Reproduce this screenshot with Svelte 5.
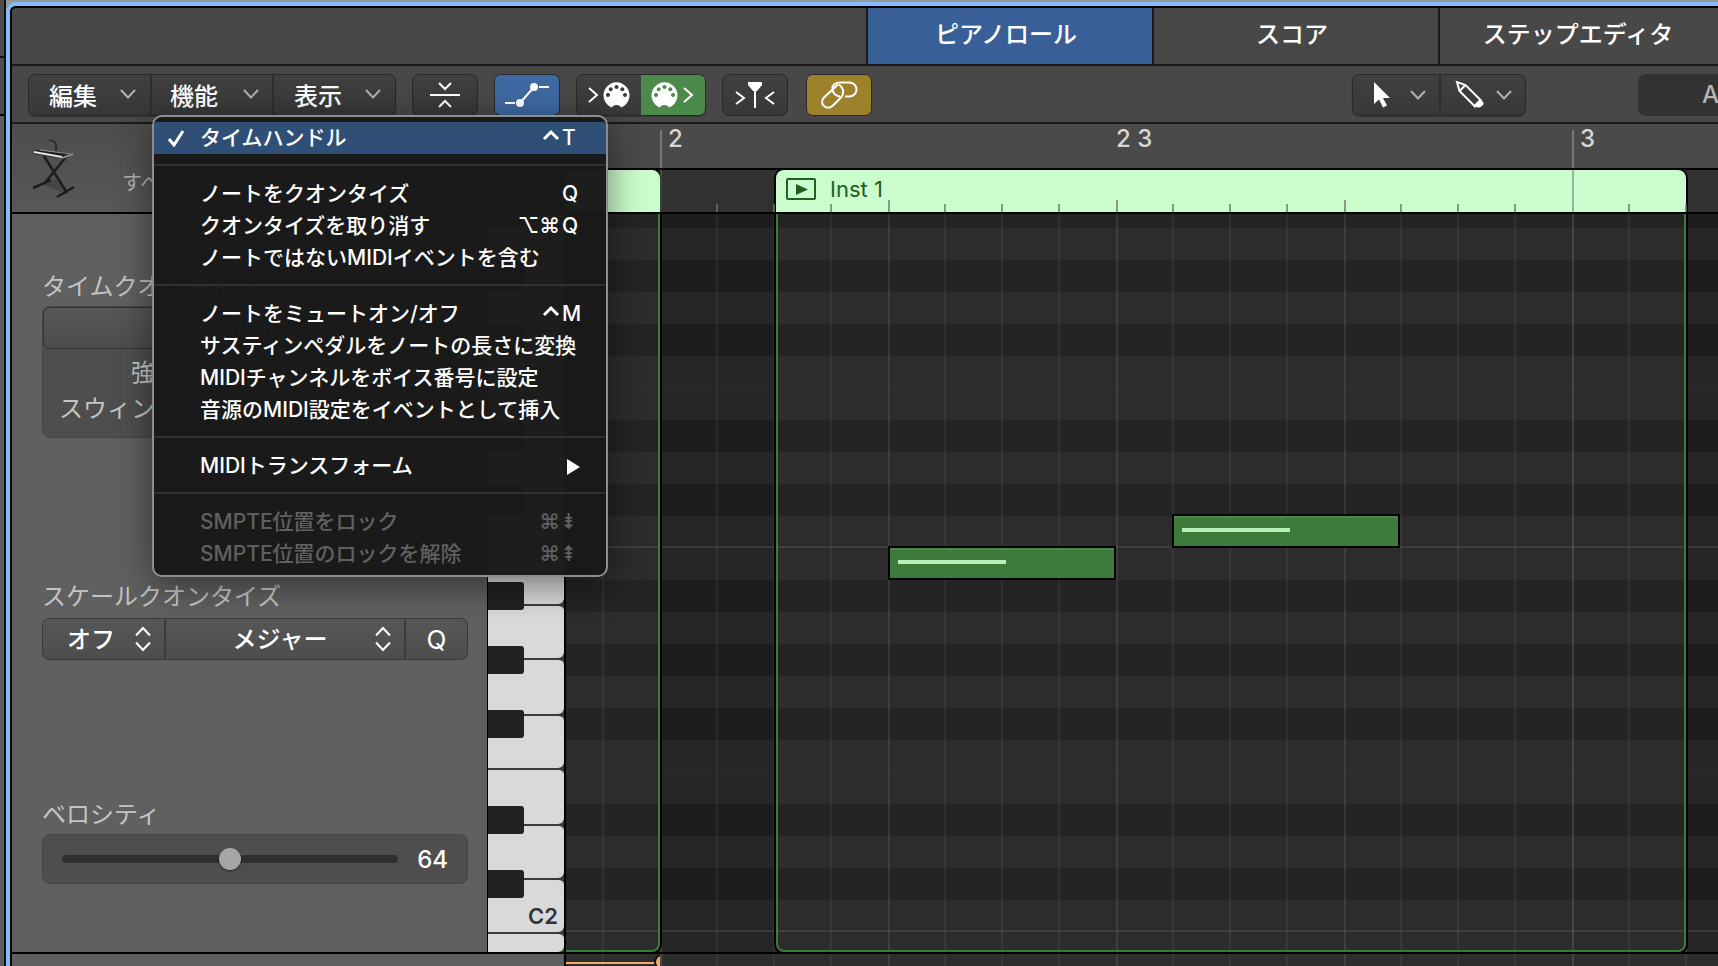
<script lang="ts">
    const tabs = ['ピアノロール', 'スコア', 'ステップエディタ'];
    let activeTab = $state('ピアノロール');
    let scaleMode = $state('オフ');
    let scaleType = $state('メジャー');
    let velocity = $state(64);

    type Item = { label: string; mods?: string; key?: string; checked?: boolean; disabled?: boolean; submenu?: boolean };

    const menuGroups: Item[][] = [
        [{ label: 'タイムハンドル', mods: '^', key: 'T', checked: true }],
        [
            { label: 'ノートをクオンタイズ', key: 'Q' },
            { label: 'クオンタイズを取り消す', mods: '⌥⌘', key: 'Q' },
            { label: 'ノートではないMIDIイベントを含む' }
        ],
        [
            { label: 'ノートをミュートオン/オフ', mods: '^', key: 'M' },
            { label: 'サスティンペダルをノートの長さに変換' },
            { label: 'MIDIチャンネルをボイス番号に設定' },
            { label: '音源のMIDI設定をイベントとして挿入' }
        ],
        [{ label: 'MIDIトランスフォーム', submenu: true }],
        [
            { label: 'SMPTE位置をロック', mods: '⌘', key: '⇟', disabled: true },
            { label: 'SMPTE位置のロックを解除', mods: '⌘', key: '⇞', disabled: true }
        ]
    ];

    // timeline geometry: 16 divisions per bar
    const division = 57;
    const barTwo = 94;
    const lines = Array.from({ length: 48 }, (_, i) => {
        const step = i - 1;
        const kind = step % 16 === 0 ? 'bar' : step % 4 === 0 ? 'beat' : 'div';
        return { x: barTwo + step * division - (kind === 'div' ? 1 : 0), kind };
    });
    const markers = [
        { text: '2', x: barTwo + 8 },
        { text: '2 3', x: barTwo + 8 * division },
        { text: '3', x: barTwo + 16 * division + 8 }
    ];
    const regions = [
        { name: '', x: -818, width: 912 },
        { name: 'Inst 1', x: 210, width: 910 }
    ];

    // one octave, B down to C
    const whiteKeys = [56, 54, 56, 54, 56, 54, 54];
    const blackKeys = [34, 98, 162, 258, 322];
    const octaves = ['', 'C2'];
    const lanes = ['w', 'b', 'w', 'b', 'w', 'b', 'w e', 'w', 'b', 'w', 'b', 'w c'];
    const notes = [
        { x: barTwo + 4 * division, y: 332 },
        { x: barTwo + 9 * division - 1, y: 300 }
    ];
</script>

{#snippet chevron()}
    <svg class="chevron" width="16" height="10" viewBox="0 0 16 10" aria-hidden="true"><path d="M1 1l7 7.500l7-7.500" /></svg>
{/snippet}

{#snippet updown()}
    <svg class="updown" width="18" height="26" viewBox="0 0 18 26" aria-hidden="true"><path d="M2 9.500L9 2l7 7.500M2 16.500L9 24l7-7.500" /></svg>
{/snippet}

{#snippet midiPort()}
    <path
        class="solid"
        fill-rule="evenodd"
        d="M9 25.500A13 13 0 1 1 18 25.500C17.500 22 9.500 22 9 25.500ZM13.500 3a2 2 0 1 0 .01 0ZM7.700 5.200a2 2 0 1 0 .01 0ZM19.300 5.200a2 2 0 1 0 .01 0ZM5 11a2 2 0 1 0 .01 0ZM22 11a2 2 0 1 0 .01 0Z"
    />
{/snippet}

<div class="desktop">
    <div class="edge"></div>
    <div class="window">
        <div class="inner">
            <nav class="tabs">
                {#each tabs as tab}
                    <button class:active={tab === activeTab} onclick={() => (activeTab = tab)}>{tab}</button>
                {/each}
            </nav>

            <div class="toolbar">
                <div class="group menus">
                    <button>編集{@render chevron()}</button>
                    <div class="menu-anchor">
                        <button aria-haspopup="true" aria-expanded="true">機能{@render chevron()}</button>
                        <div class="menu" role="menu">
                            {#each menuGroups as group, i}
                                {#if i > 0}<hr />{/if}
                                {#each group as item}
                                    <button class="item" class:current={item.checked} role="menuitem" disabled={item.disabled}>
                                        <span class="check">
                                            {#if item.checked}
                                                <svg width="18" height="18" viewBox="0 0 18 18"><path d="M2 10l5 6L16 2" /></svg>
                                            {/if}
                                        </span>
                                        <span class="label">{item.label}</span>
                                        {#if item.mods === '^'}
                                            <svg class="ctrl" width="18" height="20" viewBox="0 0 18 20" role="img" aria-label="control"><path d="M2 11l7-7l7 7" /></svg>
                                        {:else if item.mods}
                                            <span class="mods">{item.mods}</span>
                                        {/if}
                                        {#if item.submenu}
                                            <span class="key">
                                                <svg width="18" height="18" viewBox="0 0 18 18"><path class="solid" d="M5 2v16l13-8z" /></svg>
                                            </span>
                                        {:else if item.key}
                                            <span class="key">{item.key}</span>
                                        {/if}
                                    </button>
                                {/each}
                            {/each}
                        </div>
                    </div>
                    <button>表示{@render chevron()}</button>
                </div>

                <button class="tool" aria-label="ノートを折りたたむ">
                    <svg width="32" height="30" viewBox="0 0 32 30"><path d="M10 3l6 6l6-6M1 15h30M10 27l6-6l6 6" /></svg>
                </button>
                <button class="tool blue" aria-label="オートメーション">
                    <svg width="46" height="26" viewBox="0 0 46 26"><path d="M1 21h10M16 21L30 5M35 5h10" /><circle class="solid" cx="16" cy="21" r="4" /><circle class="solid" cx="30" cy="5" r="4" /></svg>
                </button>
                <div class="group midi">
                    <button aria-label="MIDI入力">
                        <svg width="44" height="28" viewBox="0 0 44 28"><path d="M2 7l8 7l-8 7" /><g transform="translate(16 1)">{@render midiPort()}</g></svg>
                    </button>
                    <button class="green" aria-label="MIDI出力">
                        <svg width="44" height="28" viewBox="0 0 44 28"><g transform="translate(0 1)">{@render midiPort()}</g><path d="M33 7l8 7l-8 7" /></svg>
                    </button>
                </div>
                <button class="tool" aria-label="再生ヘッドをキャッチ">
                    <svg width="40" height="28" viewBox="0 0 40 28"><path d="M1 11l8 6l-8 6M39 11l-8 6l8 6M20 6v21" /><path class="solid" d="M13 1h14v3l-5 6h-4l-5-6z" /></svg>
                </button>
                <button class="tool gold" aria-label="リンク">
                    <svg width="38" height="28" viewBox="0 0 38 28"><path d="M18 3.500L4 16.500c-6 6 3 14 9 8l8-8c4-5 2-10-2-13M20 15.500c-8 0-12-14 0-14h9c10 0 10 14 0 14h-4" /></svg>
                </button>

                <div class="group pointers">
                    <button aria-label="ポインタツール">
                        <svg width="18" height="28" viewBox="0 0 18 28"><path class="solid" d="M1 1v22l5-4.500l4 8l4-2l-4-7.500h7z" /></svg>
                        {@render chevron()}
                    </button>
                    <button aria-label="鉛筆ツール">
                        <svg width="30" height="30" viewBox="0 0 30 30"><path d="M2 2l2.500 9L20 26.500l6-6L10.500 5zM4.500 11l6-6" /><path class="solid" d="M19 25l6-6l3 3q1.500 2-1 4t-4.500 1.500z" /></svg>
                        {@render chevron()}
                    </button>
                </div>
                <div class="display">A</div>
            </div>

            <div class="editor">
                <header class="track">
                    <svg class="synth" width="44" height="62" viewBox="0 0 44 62" aria-hidden="true">
                        <path d="M10 46l14-5l10 15z" fill="#464646" stroke="none" />
                        <path d="M17 2q7 1 7 5v6" fill="none" stroke="#252525" stroke-width="1.500" />
                        <path d="M12 18L35 55M34 19L12 46M1 50l18-8M25 59l17-10" fill="none" stroke="#1c1c1c" stroke-width="2.500" />
                        <path d="M3 12l38 4l-8 5L2 16z" fill="#231c1c" stroke="none" />
                        <path d="M2 14l28 5" stroke="#e4e4ea" stroke-width="2" />
                        <path d="M30 20l11-4" stroke="#88888f" stroke-width="2" />
                        <path d="M8 12l31 4" stroke="#8b8b91" stroke-width="1" />
                    </svg>
                    <span>すべて</span>
                </header>

                <div class="timeline">
                    <div class="ruler">
                        {#each markers as marker}
                            <span class="marker" style="left: {marker.x}px">{marker.text}</span>
                        {/each}
                        {#each lines.filter((l) => l.kind === 'bar') as line}
                            <i class="tick" style="left: {line.x}px"></i>
                        {/each}
                    </div>
                    <div class="strip">
                        {#each regions as region}
                            <div class="region-head" style="left: {region.x}px; width: {region.width}px">
                                {#if region.name}
                                    <svg width="30" height="22" viewBox="0 0 30 22" aria-hidden="true"><rect x="1" y="1" width="28" height="20" rx="1" /><path d="M10 6v11l12-5.500z" /></svg>
                                    {region.name}
                                {/if}
                            </div>
                        {/each}
                        {#each lines as line}
                            <i class="tick {line.kind}" style="left: {line.x}px"></i>
                        {/each}
                    </div>
                </div>

                <aside class="inspector">
                    <section>
                        <h2>タイムクオンタイズ</h2>
                        <div class="box quantize">
                            <button>1/16</button>
                            <p>強さ</p>
                            <p>スウィング</p>
                        </div>
                    </section>
                    <section>
                        <h2>スケールクオンタイズ</h2>
                        <div class="scale">
                            <label class="off">
                                <select bind:value={scaleMode} aria-label="スケールクオンタイズ"><option>オフ</option><option>オン</option></select>
                                {@render updown()}
                            </label>
                            <label class="type">
                                <select bind:value={scaleType} aria-label="スケール"><option>メジャー</option><option>マイナー</option></select>
                                {@render updown()}
                            </label>
                            <button>Q</button>
                        </div>
                    </section>
                    <section>
                        <h2><label for="velocity">ベロシティ</label></h2>
                        <div class="box velocity">
                            <input id="velocity" type="range" min="0" max="128" bind:value={velocity} />
                            <output for="velocity">{velocity}</output>
                        </div>
                    </section>
                </aside>

                <div class="keyboard">
                    {#each octaves as name}
                        <div class="octave">
                            {#each whiteKeys as height, i}
                                <div class="white" style="height: {height}px">{i === 6 ? name : ''}</div>
                            {/each}
                            {#each blackKeys as top}
                                <div class="black" style="top: {top}px"></div>
                            {/each}
                        </div>
                    {/each}
                    <div class="white last"></div>
                </div>

                <div class="canvas">
                    {#each octaves as _}
                        {#each lanes as lane}
                            <div class="lane {lane}"></div>
                        {/each}
                    {/each}
                    <div class="lane w last"></div>
                    {#each lines as line}
                        <i class="line {line.kind}" style="left: {line.x}px"></i>
                    {/each}
                    {#each regions as region}
                        <div class="region" style="left: {region.x}px; width: {region.width}px"></div>
                    {/each}
                    {#each notes as note}
                        <div class="note" style="left: {note.x}px; top: {note.y}px"></div>
                    {/each}
                </div>

                <div class="footer-left"></div>
                <div class="automation">
                    {#each lines as line}
                        <i class="line {line.kind}" style="left: {line.x}px"></i>
                    {/each}
                    <svg width="94" height="12" viewBox="0 0 94 12" aria-hidden="true"><path d="M0 9h90" stroke="#f4a964" stroke-width="2" /><circle cx="96" cy="8" r="7" fill="#f4a964" stroke="#111" stroke-width="2" /></svg>
                </div>
            </div>
        </div>
    </div>
</div>

<style>
    :global(body) {
        margin: 0;
        background: #999;
    }

    .desktop {
        box-sizing: border-box;
        display: flex;
        height: 100vh;
        min-height: 640px;
        overflow: hidden;
        font-family: Inter, 'Noto Sans CJK JP', sans-serif;
        font-size: 24px;
        color: #fff;
    }

    .desktop *,
    .desktop *::before {
        box-sizing: border-box;
    }

    button,
    select {
        font: inherit;
        color: inherit;
        margin: 0;
        padding: 0;
        border: 0;
        background: none;
        white-space: nowrap;
    }

    svg {
        flex: none;
        fill: none;
        stroke: currentColor;
        stroke-width: 2;
    }

    .solid {
        fill: currentColor;
        stroke: none;
    }

    .edge {
        flex: none;
        width: 6px;
        border-right: 2px solid #111;
        background: linear-gradient(#4d4d4d 56px, #111 56px 58px, #4d4d4d 58px 114px, #000 114px 116px, #5f5f5f 116px);
    }

    .window {
        flex: 1;
        min-width: 0;
        display: flex;
        margin-top: 2px;
        border: solid #85bbff;
        border-width: 4px 0 0 4px;
        border-top-left-radius: 10px;
        background: #000;
    }

    .inner {
        flex: 1;
        min-width: 0;
        display: flex;
        flex-direction: column;
        border: solid #000;
        border-width: 2px 0 0 2px;
        border-top-left-radius: 6px;
        overflow: hidden;
        background: #484848;
    }

    .tabs {
        display: flex;
        justify-content: flex-end;
        margin-right: -6px;
        height: 58px;
        flex: none;
        border-bottom: 2px solid #1a1a1a;
    }

    .tabs button {
        width: 286px;
        padding: 0 8px 8px 0;
        border-left: 2px solid #1a1a1a;
        font-weight: 500;
    }

    .tabs .active {
        background: #385f97;
    }

    .toolbar {
        display: flex;
        align-items: flex-start;
        flex: none;
        height: 58px;
        padding: 8px 0 0 16px;
        border-bottom: 2px solid #1a1a1a;
        font-weight: 500;
    }

    .group {
        display: flex;
        flex: none;
        height: 42px;
        border: 1px solid #292929;
        border-radius: 7px;
        background: linear-gradient(#404040, #383838);
        box-shadow: 0 1px 1px #2226;
    }

    .group button {
        display: flex;
        align-items: center;
        height: 40px;
    }

    .menus {
        margin-right: 16px;
    }

    .menus > button,
    .menu-anchor > button {
        width: 121px;
        justify-content: space-between;
        padding: 0 14px 2px 20px;
    }

    .menu-anchor {
        position: relative;
        width: 124px;
        border: solid #2e2e2e;
        border-width: 0 2px;
    }

    .menu-anchor > button {
        padding-left: 18px;
    }

    .chevron {
        color: #b0b0b0;
    }

    .tool {
        display: flex;
        flex: none;
        align-items: center;
        justify-content: center;
        width: 66px;
        height: 42px;
        margin-right: 16px;
        border: 1px solid #292929;
        border-radius: 7px;
        background: linear-gradient(#404040, #383838);
    }

    .blue {
        background: #3f69a3;
    }

    .gold {
        margin-left: 2px;
        background: #9d822b;
    }

    .midi {
        margin-right: 16px;
    }

    .midi button {
        width: 64px;
        padding-left: 10px;
    }

    .midi .green {
        background: #4c8a4c;
        border-radius: 0 6px 6px 0;
    }

    .pointers {
        margin-left: auto;
        margin-right: 112px;
    }

    .pointers button {
        width: 86px;
        justify-content: space-between;
        padding: 0 13px 0 20px;
    }

    .pointers button + button {
        padding-left: 14px;
        border-left: 2px solid #2e2e2e;
    }

    .display {
        flex: none;
        width: 80px;
        height: 42px;
        padding-left: 64px;
        border-radius: 8px 0 0 8px;
        background: #323232;
        color: #b5b5b5;
        line-height: 42px;
    }

    .menu {
        position: absolute;
        z-index: 10;
        top: 40px;
        left: 0;
        width: 456px;
        padding: 5px 0;
        border: 2px solid #8d8d8d;
        border-radius: 10px;
        background: #191919fb;
        box-shadow: 0 8px 36px #0007;
        font-size: 21px;
    }

    .menu hr {
        height: 2px;
        margin: 10px 0 12px;
        border: 0;
        background: #303030;
    }

    .group .item {
        display: flex;
        width: 100%;
        height: 32px;
        line-height: 32px;
        text-align: left;
    }

    .current {
        background: #304f77;
    }

    .item:disabled {
        color: #606060;
    }

    .check {
        display: flex;
        flex: none;
        width: 46px;
        padding-left: 13px;
    }

    .check svg,
    .ctrl {
        stroke-width: 3;
    }

    .label {
        flex: 1;
    }

    .key {
        display: flex;
        flex: none;
        align-items: center;
        width: 46px;
        padding-left: 2px;
    }

    .editor {
        flex: 1;
        min-height: 0;
        display: grid;
        grid-template-columns: 476px 78px minmax(0, 1fr);
        grid-template-rows: 90px minmax(0, 1fr) 12px;
    }

    .track {
        grid-column: 1 / 3;
        display: flex;
        padding: 14px 0 0 20px;
        border-bottom: 2px solid #000;
        background: linear-gradient(#4d4d4d, #585858);
        color: #b0b0b0;
        font-size: 20px;
    }

    .track span {
        padding: 30px 0 0 46px;
        line-height: 30px;
    }

    .timeline {
        overflow: hidden;
        border-bottom: 2px solid #000;
    }

    .ruler {
        position: relative;
        height: 46px;
        border-bottom: 2px solid #000;
        background: #4a4a4a;
        color: #d8d8d8;
        font-weight: 500;
    }

    .marker {
        position: absolute;
        top: 0;
        line-height: 30px;
    }

    .tick {
        position: absolute;
        bottom: 0;
        width: 2px;
        height: 38px;
        background: #777;
    }

    .strip {
        position: relative;
        height: 42px;
        background: #313131;
    }

    .region-head {
        position: absolute;
        top: 0;
        bottom: 0;
        display: flex;
        gap: 14px;
        padding: 8px 10px;
        border-radius: 8px 8px 0 0;
        background: #cbfccd;
        box-shadow: 0 0 0 2px #000;
        color: #226020;
        font-size: 22px;
        line-height: 22px;
    }

    .region-head path {
        fill: currentColor;
        stroke: none;
    }

    .strip .tick {
        height: 8px;
        background: #6c786cbb;
    }

    .strip .beat {
        height: 12px;
    }

    .strip .bar {
        height: 42px;
        background: #6c786c88;
    }

    .inspector {
        display: flex;
        flex-direction: column;
        padding: 54px 19px 0 30px;
        border: solid #000;
        border-width: 0 1px 2px 0;
        background: #606060;
        color: #c4c4c4;
    }

    section:nth-child(1) {
        height: 310px;
    }

    section:nth-child(2) {
        height: 218px;
    }

    h2 {
        height: 38px;
        margin: 0;
        font: inherit;
        line-height: 38px;
    }

    .box {
        border: 1px solid #454545;
        border-radius: 8px;
        background: #4e4e4e;
    }

    .quantize {
        height: 132px;
    }

    .quantize button {
        width: 100%;
        height: 42px;
        margin-bottom: 6px;
        border: 1px solid #343434;
        border-radius: 7px;
        background: linear-gradient(#575757, #4d4d4d);
    }

    .quantize p {
        width: 136px;
        margin: 0;
        line-height: 36px;
        text-align: right;
        white-space: nowrap;
    }

    .scale {
        display: flex;
        height: 42px;
        margin-top: 2px;
        border: 1px solid #3a3a3a;
        border-radius: 7px;
        background: linear-gradient(#575757, #4d4d4d);
        color: #fff;
        font-weight: 500;
    }

    .scale label {
        position: relative;
        display: flex;
        border-right: 2px solid #3d3d3d;
    }

    .scale select {
        width: 100%;
        appearance: none;
    }

    .off {
        width: 123px;
    }

    .off select {
        padding-left: 24px;
    }

    .type {
        flex: 1;
    }

    .type select {
        padding-right: 10px;
        text-align: center;
        text-align-last: center;
    }

    .updown {
        position: absolute;
        top: 7px;
        right: 12px;
        pointer-events: none;
    }

    .scale button {
        width: 61px;
        font-size: 26px;
        font-weight: 400;
    }

    .velocity {
        display: flex;
        align-items: center;
        gap: 19px;
        height: 50px;
        padding: 0 19px;
        color: #fff;
        font-weight: 500;
    }

    .velocity input {
        flex: 1;
        min-width: 0;
        height: 24px;
        margin: 0;
        appearance: none;
        background: none;
    }

    .velocity input::-webkit-slider-runnable-track {
        height: 8px;
        border-radius: 4px;
        background: #303030;
    }

    .velocity input::-webkit-slider-thumb {
        appearance: none;
        width: 22px;
        height: 22px;
        margin-top: -7px;
        border-radius: 50%;
        background: #a6a6a6;
        box-shadow: 0 1px 2px #0008;
    }

    .keyboard {
        display: flex;
        flex-direction: column;
        justify-content: flex-end;
        overflow: hidden;
        border: solid #000;
        border-width: 0 2px 2px 0;
        background: #3b3b3d;
    }

    .octave {
        position: relative;
        flex: none;
    }

    .white {
        flex: none;
        padding: 16px 6px 0 0;
        border-top: 2px solid #3b3b3d;
        border-radius: 0 6px 6px 0;
        background: #d9d9db;
        color: #333;
        font-size: 22px;
        font-weight: 600;
        line-height: 40px;
        text-align: right;
    }

    .white.last {
        height: 20px;
    }

    .black {
        position: absolute;
        left: 0;
        width: 36px;
        height: 28px;
        border-radius: 0 3px 3px 0;
        background: #222;
    }

    .canvas {
        position: relative;
        display: flex;
        flex-direction: column;
        justify-content: flex-end;
        overflow: hidden;
        border-bottom: 2px solid #000;
    }

    .lane {
        flex: none;
        height: 32px;
        background: #262626;
    }

    .lane.b {
        background: #1d1d1d;
    }

    .lane.e {
        border-bottom: 1px solid #2b2b2b;
    }

    .lane.c {
        border-bottom: 2px solid #383838;
    }

    .lane.last {
        height: 20px;
    }

    .line {
        position: absolute;
        top: 0;
        bottom: 0;
        width: 2px;
        background: #ffffff0e;
    }

    .line.beat {
        background: #ffffff16;
    }

    .line.bar {
        background: #ffffff20;
    }

    .region {
        position: absolute;
        top: -10px;
        bottom: 0;
        border: 2px solid #3a7d38;
        border-radius: 8px;
        background: #ffffff08;
        box-shadow: 0 0 0 2px #000;
    }

    .note {
        position: absolute;
        width: 228px;
        height: 34px;
        padding: 12px 8px;
        border: 2px solid #000;
        background: #3e7b3a;
        box-shadow: inset 0 2px #4b8948;
    }

    .note::before {
        content: '';
        display: block;
        width: 108px;
        height: 4px;
        background: #b9efba;
    }

    .footer-left {
        grid-column: 1 / 3;
        border-right: 2px solid #000;
        background: #606060;
    }

    .automation {
        position: relative;
        overflow: hidden;
        background: #2d2d2d;
    }

    .automation svg {
        display: block;
    }
</style>
